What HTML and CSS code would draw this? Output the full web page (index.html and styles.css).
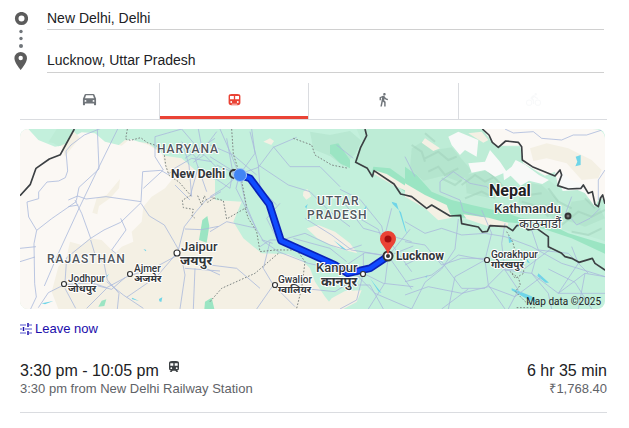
FILE: index.html
```
<!DOCTYPE html>
<html lang="en">
<head>
  <meta charset="UTF-8">
  <meta name="viewport" content="width=device-width, initial-scale=1.0">
  <title>New Delhi to Lucknow</title>
  <link rel="stylesheet" href="styles.css">
</head>
<body>
<main class="directions">

  <!-- from / to -->
  <form class="route-form">
    <svg class="route-rail" viewBox="0 0 14 58" aria-hidden="true">
      <circle cx="7.500" cy="6.500" r="4.800" fill="none" stroke="#5c5c5c" stroke-width="3.600"/>
      <circle cx="7" cy="19.500" r="1.700" fill="#70757a"/>
      <circle cx="7" cy="26.500" r="1.700" fill="#70757a"/>
      <circle cx="7" cy="34" r="2" fill="#70757a"/>
      <path d="M6.700 40a6.300 6.300 0 0 0-6.300 6.300C.4 51 6.700 58 6.700 58S13 51 13 46.300A6.300 6.300 0 0 0 6.700 40zm0 8.200a2.200 2.200 0 1 1 0-4.400 2.200 2.200 0 0 1 0 4.400z" fill="#5c5c5c"/>
    </svg>
    <div class="route-fields">
      <input class="place" type="text" aria-label="Starting point" value="New Delhi, Delhi">
      <input class="place" type="text" aria-label="Destination" value="Lucknow, Uttar Pradesh">
    </div>
  </form>

  <!-- travel modes -->
  <nav class="modes">
    <button class="mode" type="button" aria-label="Driving">
      <svg viewBox="0 0 16 16"><path fill-rule="evenodd" d="M4 2h8c.7 0 1.100.3 1.300.9L15 7.300v6.200c0 .3-.2.500-.5.500h-1.200c-.3 0-.5-.2-.5-.5v-1.200H3.200v1.200c0 .3-.2.500-.5.500H1.500c-.3 0-.5-.2-.5-.5V7.300l1.700-4.400C2.900 2.300 3.300 2 4 2zm.3 1.500L3.200 6.700h9.600l-1.100-3.200zM3.700 8.500a1 1 0 1 0 0 2 1 1 0 0 0 0-2zm8.600 0a1 1 0 1 0 0 2 1 1 0 0 0 0-2z"/></svg>
    </button>
    <button class="mode mode-active" type="button" aria-label="Transit" aria-pressed="true">
      <svg viewBox="0 0 16 16"><path fill-rule="evenodd" d="M5 2h6c2.400 0 3.300.7 3.300 2.500v7c0 1.700-1 2.700-2.800 2.700h-7c-1.800 0-2.800-1-2.800-2.700v-7C1.700 2.700 2.600 2 5 2zM3.200 4.300v3.500h4.100V4.300zm5.500 0v3.500h4.100V4.300zM4.500 9.700a1 1 0 1 0 0 2 1 1 0 0 0 0-2zm7 0a1 1 0 1 0 0 2 1 1 0 0 0 0-2zM5 12.400v.8h6v-.8z"/></svg>
    </button>
    <button class="mode" type="button" aria-label="Walking">
      <svg viewBox="0 0 24 24"><path d="M13.500 5.500c1.100 0 2-.9 2-2s-.9-2-2-2-2 .9-2 2 .9 2 2 2zM9.800 8.900L7 23h2.400l1.600-8 2.100 2v6h2.300v-7.500l-2.200-2 .5-3C14.800 12 16.800 13 19 13v-2.200c-1.900 0-3.500-1-4.300-2.400l-1-1.500c-.4-.6-1-1-1.700-1-.3 0-.5.1-.8.1L5.700 8.200V13h2.200V9.600l1.900-.7"/></svg>
    </button>
    <button class="mode mode-disabled" type="button" aria-label="Cycling" disabled>
      <svg viewBox="0 0 24 24"><path d="M15.500 5.500a2 2 0 1 0 0-4 2 2 0 0 0 0 4zM5 12a5 5 0 1 0 0 10 5 5 0 0 0 0-10zm0 8.500a3.500 3.500 0 1 1 0-7 3.500 3.500 0 0 1 0 7zm5.800-10l2.400-2.400.8.800c1.300 1.300 3 2.100 5.100 2.100V9c-1.500 0-2.700-.6-3.600-1.500l-1.900-1.900c-.5-.4-1-.6-1.600-.6s-1.100.2-1.400.6L7.800 8.400c-.4.4-.6.9-.6 1.400 0 .6.200 1.100.6 1.400L11 14v5h2v-6.200l-2.200-2.300zM19 12a5 5 0 1 0 0 10 5 5 0 0 0 0-10zm0 8.500a3.500 3.500 0 1 1 0-7 3.500 3.500 0 0 1 0 7z"/></svg>
    </button>
  </nav>

  <!-- map -->
  <svg class="map" viewBox="0 0 585 180" preserveAspectRatio="xMidYMid slice" role="img" aria-label="Route map from New Delhi to Lucknow">
    <rect width="585" height="180" fill="#c3f0dc"/>
    <g transform="scale(.33333)">
      <!-- west -->
      <g transform="translate(-15 -12)">
        <path class="land" d="M15 300L330 45 400 55 450 92 500 100 540 135 600 165 600 225 680 230 655 290 685 340 740 385 820 388 860 405 885 430 900 470 930 515 960 552H15z"/>
        <path class="sand" d="M15 12H40L70 45 120 65 150 60 175 35 200 22 240 25 270 50 320 62 345 42 400 60 440 85 452 130 470 165 450 190 410 215 385 245 380 290 350 320 355 350 320 365 300 385 260 345 225 340 200 360 165 350 155 395 130 425 110 500 130 552H15z"/>
        <path class="land" d="M130 25L175 18 195 38 165 75 150 95 140 62zM245 220l30-10 40-48-3 28-25 28-35 25-5 25-15-5z"/>
        <path class="grass" d="M125 12h55l-28 44-22 8-15-10-15-2z"/>
        <path class="forest" d="M552 345l10-60 15-12 6 30-8 50zM250 545l10-18 14-4-6 20zM570 530l20-12 8 34h-30z"/>
        <path class="water" d="M385 372l9 3-2 4zM432 522l10-5-3 14-6-2zM352 518l20 10-22-6zM80 535l35-7-25 10zM270 455l12-8-8 12z"/>
        <path class="road" d="M88 483L130 385 193 248 245 140 308 12M36 231l35-10 0-20 25-30 35-3 20-10 7-20-5-60 15-18 40-30 55-22M36 231l5 45 24 40-8 40 2 120 5 40-20 42M65 316l45-35 75-52M15 370l48-5M15 410l45-14M247 12l5 120-60 55-8 40M160 225l28-12 25 9 60-7 105 15 5-90 55-4 20 12 15-10M190 240l-30 5M180 225l20 40 27 75-72 58-5 75M227 340l40-25 50-23 62-60M317 280l16 35-43 60 15 12M227 345l12 40 28 30 10 50 35 40-5 47M378 235l25 38 45 27 32 55 10 18M155 478l75-5 45 15 65-35 75-23 70-38M150 478l-50 25-30 45M150 490l32 60M275 470l50 40 60 40M230 478l60 15 40-35M275 490l-60 60M485 385l-60 70-90 62M490 375l18-70 35-45 30-35 45-25M490 390l60 30 65 30M500 400l10 50-15 102M540 430l-5 122M510 430l105 8M510 312l50 2 50-10M480 180l45 45M385 190l60-55-25-40 0-60 80-23M530 215l-8-95-18-60M510 100l90-60M500 50l45 50 60-80M525 215l25-90M540 100l35 100M470 135l60-35 60 10M550 12l15 80-30 20M500 12l60 70 50 50"/>
        <path class="state-line" d="M337 12l-5 30 15 4 30-8 20 15 25 8 25 20 5 40 10 30 30 20 35 40-25 15 3 22 30 5-4 20 8 6M548 212l12 28 8-28 10 20 20-14"/>
        <path class="border-line" d="M178 12l-42 77-33 13-40 28-17 48-31 34"/>
      </g>

      <!-- centre -->
      <g transform="translate(570 -12)">
        <path class="hill" d="M300 20l60 10 60-12 35 30-20 40-35 35-40-30-50-20z"/>
        <path class="grass" d="M440 12h175v190l-80-40-55-25-50-28 30-50z"/>
        <path class="forest" d="M490 125l50 5 70 50v38l-50-36-75-38z"/>
        <path class="forest" d="M360 60l25-5 35 50 0 25-30-15-30-30z"/>
        <path class="land" d="M280 200l12-8 12 22-15 10-10-12zM290 310l35-10 50 20 45 35 22 30-60-15-60-30zM160 50l20-10 12 8-8 12zM365 520l40-22 50-2-15 35-40 21h-60z"/>
        <path class="land" d="M490 135l40 12 80 50v10l-60-26-60-35z"/>
        <path class="road" d="M88 150L60 80 30 12M88 150L0 95M85 150L40 190 0 215M88 150l-10 40 30 60 30 60 20 35 30 10M88 150l20 90 30 70M95 140l40-55-10-73M95 145l50-18 45-60 70-30M20 120l90 40M0 60l70 30 70 60M50 40l20 110M0 150l60 40 10-60M120 20l25 100 5 70 50 50M190 65l50 60 90 0 60 60M145 120l90 60 65 20 60 60 60 45M215 345l-35 0-30 20M155 345l50 35 90 35 140 30 60 60 110 47M180 350l-20 80 30 50-50 72M0 320l50-30 90 20M0 420l80 10 70 60M200 340l-30-60 40-45M215 345l70-20 75 35 50 15 45-15M250 340l110 30 50 40M535 393l-110-18-60-45-80-50M535 393l-20-90-65-80-60-30M535 393l-30-80-70-40M535 393l75-30M535 393l65-80M535 393l70 100M535 393l-10 80-50 79M535 393l-70-10-60 40M460 445l-20 80-50 27M460 445l60 30 90 10M460 445l0-60M455 450l-80 50-100-10-80-5M195 485l60 60M430 100l-50-40M520 552l-40-72-60 0M400 230l60 80 145 40M545 250l-20 80 80 110"/>
        <path class="state-line" d="M65 12l5 75 25 80 15 80-60 35-10-55-35-10M105 250l10 30 25 40 10 60 45-5 65 0 25 35-10 80-15 60M0 530l35-40 100-45 70-60M250 40l55 20 10 30 50 30 50 10"/>
        <path class="water" d="M545 230l15 5 25 80 6 12-18-65-25-25zM480 460l35 45-10-6zM285 245l8-8-4 14zM460 255l10-14-4 16zM370 345l40 30-12-4z"/>
      </g>

      <!-- east -->
      <g transform="translate(1155 -12)">
        <path class="grass" d="M0 12h240l30 50 75 5 15 50 80 55 30 25 80-5 80 45v120l-100-30-90-20-80-10-90-20-190-40L0 130z"/>
        <path class="hill" d="M20 70l40-25 30 30 50-8 60 70-35 35-50-20-60 15-40-35zM180 150l70-15 40 40-30 45-75-15zM350 170l60 10 50 45-10 60-60-40-50-10zM500 230l70-10 30 60-60 25-60-20z"/>
        <path class="ridge" d="M20 60l30 20 10 30M60 100l40-20 30 25 25-10M70 140l30-15 20 25 40-20M110 160l40 20 20-15M170 180l40-30 30 20 30-15M180 220l50-20 40 20M250 140l50 50M330 190l40 20 40-5M350 230l50 15 30 30M430 190l30 40 40 20M470 300l50-40 40 15 40-20M500 320l50 10 40-20M540 220l30 30M60 25l30 25"/>
        <path class="forest" d="M0 125l35 25 45 50 60 25 60 15 90 20 60 20 60 5 80 40 110 33v28L500 340l-90-30-70-15-100-10-90-10-50-30-45-10L0 175z"/>
        <path class="land" d="M0 175l60 35 65 30 15 38-40 8L60 250 0 215zM175 268l75 10 60 16-5 16-60-8-60-20zM60 40l45 30-20 8-35-25zM190 25l40-5 20 25-15 8z"/>
        <path class="sand" d="M232 12H562q38 0 38 30V232L585 215 570 245 540 205 530 180 460 185 450 140 420 152 355 115 345 62 270 62z"/>
        <path class="land" d="M375 70l50-15 65 15 70 35 30 30-10 25-50 5-45-50-60-15-40 8z"/>
        <path class="snow" d="M130 35l30-15 60 25-5 50-35-20-15 15-25-30zM190 115l50-5 15-35 30 35 20 30-35 15-30-20-40 8zM295 145l25-20 12-20 30 15 40 30 30 15-20 12-40-10-25 15-30-30-20 14zM458 160l15-20 25 25 40 15 15 30-35-15-45 3z"/>
        <path class="water" d="M512 95l15-5 0 30-16 4 6-14zM60 455l8-5-4 8zM365 400l10 15-8-3zM400 445l32 28-10 0-25-20zM310 330l12 20-10 4zM320 490l60 24 20 20-30-10-50-28z"/>
        <path class="road" d="M300 12l25 12 60-4 25 20 60 5 35-15 40 0 55-18M600 135l-20 30 0 60M0 95l30 60M105 200l0-30 40-30 50 35 50 10 35 30M105 200l60 25 10 35 60 15M0 290l60 35 50-15 60 20 70-5 60 10 80 30 90 50 130 40M0 350l60 10 50 60 60-20 70 0 60 35 60-5 80-60M0 420l60-30 50 20 60 80 70 0 60-60M0 470l80-20 80-60 80 15M20 552l40-80 50-40 40-60 10-90M240 405l20-80-30-70M240 405l-90 50-20 97M240 405l10 75 50 72M300 435l80 10 80 60 140 0M300 435l-10-80 10-60M300 435l40 60-30 57M380 445l20-70-20-60M380 445l50 60 10 47M460 505l60-90-20-50M460 505l80-60 60 10M400 375l90 10 60 60M0 510l70-25 100 20 80-20 80 30 80-60M110 552l80-60M520 552l20-107M490 270l25 30 40-20 30-30M500 215l-20 55M560 552l-50-80-80-40"/>
        <path class="state-line" d="M305 320l18 30 8 30 25 35 0 30-25 15-15-20 25 20 5 20-15 20 30 30 30 10M335 548h60"/>
        <path class="border-line" d="M-120 12l5 20-18 35-15 45 35 18 15 25 5-18 60 40 20 30L0 210l20 5 45 35 15-10 55 33 32-2 3 25 50 10 12 15 15-2 8-17 50 3 18 12 12-15 15-2 20 15 25-5 35 25 0 30 40 20 10 10 20 5 22 12 40-12 8 15 30 20 25-8 22 8"/>
        <path class="border-line" d="M232 12L252 30 262 52 280 67 302 48 340 52 350 65 352 105 382 125 450 153 465 135 470 150 458 182 490 192 528 190 535 180 550 205 562 200 570 238 580 245 587 218 593 210 600 236"/>
      </g>

      <!-- train route -->
      <g transform="translate(570 -12)">
        <path class="route-edge" d="M90 150l30 10 58 78 35 109 162 73 38 25 67-15 55-37"/>
        <path class="route-line" d="M90 150l30 10 58 78 35 109 162 73 38 25 67-15 55-37"/>
      </g>
    </g>

    <circle cx="214" cy="45" r="4" fill="none" stroke="#333" stroke-width="2"/>
    <circle cx="220" cy="46" r="6.500" fill="#4285f4" stroke="#a9c7f5" stroke-width="1"/>
    <circle cx="368" cy="127" r="4.500" fill="#fff" stroke="#333" stroke-width="2"/>
    <circle cx="368" cy="127" r="2" fill="#333"/>
    <path d="M368 102a8 8 0 0 0-8 8c0 5 6.500 9 8 16 1.500-7 8-11 8-16a8 8 0 0 0-8-8z" fill="#ea4335"/>
    <circle cx="368" cy="110" r="3.500" fill="#a50e0e"/>

    <g class="labels">
      <text class="region" x="137" y="24">HARYANA</text>
      <text class="region" x="27" y="134">RAJASTHAN</text>
      <text class="region" x="297" y="76">UTTAR</text>
      <text class="region" x="287" y="90">PRADESH</text>
      <text class="city stop" x="151" y="49">New Delhi</text>
      <text class="city stop" x="376" y="131">Lucknow</text>
      <text class="city" x="161" y="122">Jaipur</text>
      <text class="city hindi" x="160" y="136">जयपुर</text>
      <text class="city" x="296" y="143">Kanpur</text>
      <text class="city hindi" x="301" y="157">कानपुर</text>
      <text class="city" x="474" y="84">Kathmandu</text>
      <text class="city light" x="499" y="99">काठमाडौं</text>
      <text class="country" x="469" y="67">Nepal</text>
      <text class="town" x="114" y="143">Ajmer</text>
      <text class="town hindi" x="114" y="153">अजमेर</text>
      <text class="town" x="48" y="153">Jodhpur</text>
      <text class="town hindi" x="48" y="163">जोधपुर</text>
      <text class="town" x="258" y="154">Gwalior</text>
      <text class="town hindi" x="258" y="164">ग्वालियर</text>
      <text class="town" x="471" y="129">Gorakhpur</text>
      <text class="town hindi" x="471" y="139">गोरखपुर</text>
      <text class="credit" x="581" y="176">Map data ©2025</text>
    </g>
    <g fill="#fff" stroke="#333" stroke-width="1.200">
      <circle cx="157" cy="124" r="3"/>
      <circle cx="110" cy="145" r="2.500"/>
      <circle cx="44" cy="155" r="2.500"/>
      <circle cx="343" cy="145" r="2.500"/>
      <circle cx="255" cy="156" r="2.500"/>
      <circle cx="467" cy="131" r="2.500"/>
      <circle cx="548" cy="87" r="2.500" fill="#777" stroke-width="2"/>
    </g>
  </svg>

  <a class="leave" href="#">
    <svg viewBox="0 0 12 12" aria-hidden="true">
      <path d="M0 2h6M9 2h3M0 6h2M5 6h7M0 10h6M9 10h3" stroke="#8d8de0" stroke-width="1.500"/>
      <path d="M8 0v4M3.500 4v4M8 8v4" stroke="#1a0dab" stroke-width="1.500"/>
    </svg>
    Leave now
  </a>

  <!-- result -->
  <section class="trip">
    <div class="trip-main">
      <div class="trip-time">3:30 pm - 10:05 pm
        <svg viewBox="0 0 10 12" aria-label="Train"><path fill="#3c4043" fill-rule="evenodd" d="M3 0h4c2 0 3 .8 3 2v5.500C10 9 9 9.500 8 9.500L9.300 11H7.500L6.300 9.800H3.700L2.500 11H.7L2 9.500C1 9.500 0 9 0 7.500V2C0 .8 1 0 3 0zM1.300 2.300v2.500h3V2.300zm4.400 0v2.500h3V2.300zM2.300 6.300a.9.900 0 1 0 0 1.800.9.900 0 0 0 0-1.800zm5.400 0a.9.900 0 1 0 0 1.800.9.900 0 0 0 0-1.800z"/></svg>
      </div>
      <div class="trip-note">3:30 pm from New Delhi Railway Station</div>
    </div>
    <div class="trip-side">
      <div class="trip-time">6 hr 35 min</div>
      <div class="trip-note">₹1,768.40</div>
    </div>
  </section>
</main>
</body>
</html>
```
FILE: styles.css
```
* {
  box-sizing: border-box;
}
body {
  margin: 0;
  background: #fff;
  color: #202124;
  font-family: "Liberation Sans", Arial, sans-serif;
}
.directions {
  padding: 8px 22px 0 20px;
}

/* from / to */
.route-form {
  display: flex;
  gap: 19px;
  margin: 0 3px 10px -6px;
}
.route-rail {
  flex: none;
  width: 14px;
  height: 58px;
  margin-top: 4px;
}
.route-fields {
  flex: 1;
  display: flex;
  flex-direction: column;
  gap: 20px;
}
.place {
  width: 100%;
  height: 22px;
  padding: 0 0 2px;
  border: 0;
  border-bottom: 1px solid #d0d0d0;
  outline: none;
  background: none;
  color: #202124;
  font: 14px "Liberation Sans", Arial, sans-serif;
}
.place + .place {
  height: 23px;
  padding-bottom: 3px;
}

/* travel modes */
.modes {
  display: grid;
  grid-template-columns: 140fr 149fr 150fr 148fr;
  border-bottom: 1px solid #dadce0;
}
.mode {
  display: flex;
  align-items: center;
  justify-content: center;
  height: 36px;
  padding: 0;
  border: 0;
  border-right: 1px solid #dadce0;
  background: none;
  cursor: pointer;
}
.mode:last-child {
  border-right: 0;
}
.mode svg {
  width: 15px;
  height: 15px;
  margin-top: -3px;
  fill: #70757a;
}
.mode-active {
  box-shadow: inset 0 -3px #ea4335;
}
.mode-active svg {
  fill: #ea4335;
}
.mode-disabled svg {
  fill: #f8f9fa;
}

/* map */
.map {
  display: block;
  width: calc(100% - 2px);
  height: 180px;
  margin-top: 9px;
  border-radius: 8px;
}
.land {
  fill: #f4f0e4;
}
.sand {
  fill: #fbf8f4;
}
.grass {
  fill: #bdecd6;
}
.hill {
  fill: #a8dcc3;
  opacity: 0.4;
}
.ridge {
  fill: none;
  stroke: #9fcfba;
  stroke-width: 6;
  opacity: 0.5;
}
.forest {
  fill: #9be5c3;
}
.snow {
  fill: #f8f9f8;
}
.water {
  fill: #6fd5e8;
}
.road,
.state-line,
.border-line,
.route-edge,
.route-line {
  fill: none;
  stroke-linejoin: round;
}
.road {
  stroke: #a9b9dc;
  stroke-width: 3;
  opacity: 0.8;
}
.state-line {
  stroke: #7d8583;
  stroke-width: 3;
  stroke-dasharray: 5 5;
}
.border-line {
  stroke: #3c4043;
  stroke-width: 5;
}
.route-edge {
  stroke: #0a22b8;
  stroke-width: 23;
}
.route-line {
  stroke: #0f4bff;
  stroke-width: 13;
}
.labels {
  fill: #333639;
  stroke: #fff;
  stroke-width: 2px;
  stroke-linejoin: round;
  paint-order: stroke;
  font-family: Roboto, "Noto Sans", sans-serif;
}
.region {
  fill: #50565c;
  font-size: 12px;
  font-weight: 500;
  letter-spacing: 1px;
}
.city {
  font-size: 13px;
  font-weight: 500;
}
.stop {
  font-size: 12px;
  font-weight: 700;
}
.town {
  font-size: 10px;
  font-weight: 500;
}
.hindi {
  font-weight: 700;
}
.light {
  font-weight: 400;
}
.country {
  fill: #202124;
  font-size: 16px;
  font-weight: 700;
}
.credit {
  fill: #202124;
  stroke: none;
  font-size: 10px;
  text-anchor: end;
}

/* departure and result */
.leave {
  display: inline-flex;
  align-items: center;
  gap: 3px;
  margin-top: 11px;
  color: #1a0dab;
  font-size: 13px;
  line-height: 18px;
  text-decoration: none;
}
.leave svg {
  width: 12px;
  height: 12px;
}
.trip {
  display: flex;
  justify-content: space-between;
  margin-top: 22px;
  padding-bottom: 15px;
  border-bottom: 1px solid #dadce0;
}
.trip-side {
  text-align: right;
}
.trip-time {
  font-size: 16px;
  line-height: 20px;
}
.trip-time svg {
  width: 10px;
  height: 12px;
  margin-left: 6px;
  vertical-align: 3px;
}
.trip-note {
  color: #5f6368;
  font-size: 13px;
  line-height: 16px;
}
```
